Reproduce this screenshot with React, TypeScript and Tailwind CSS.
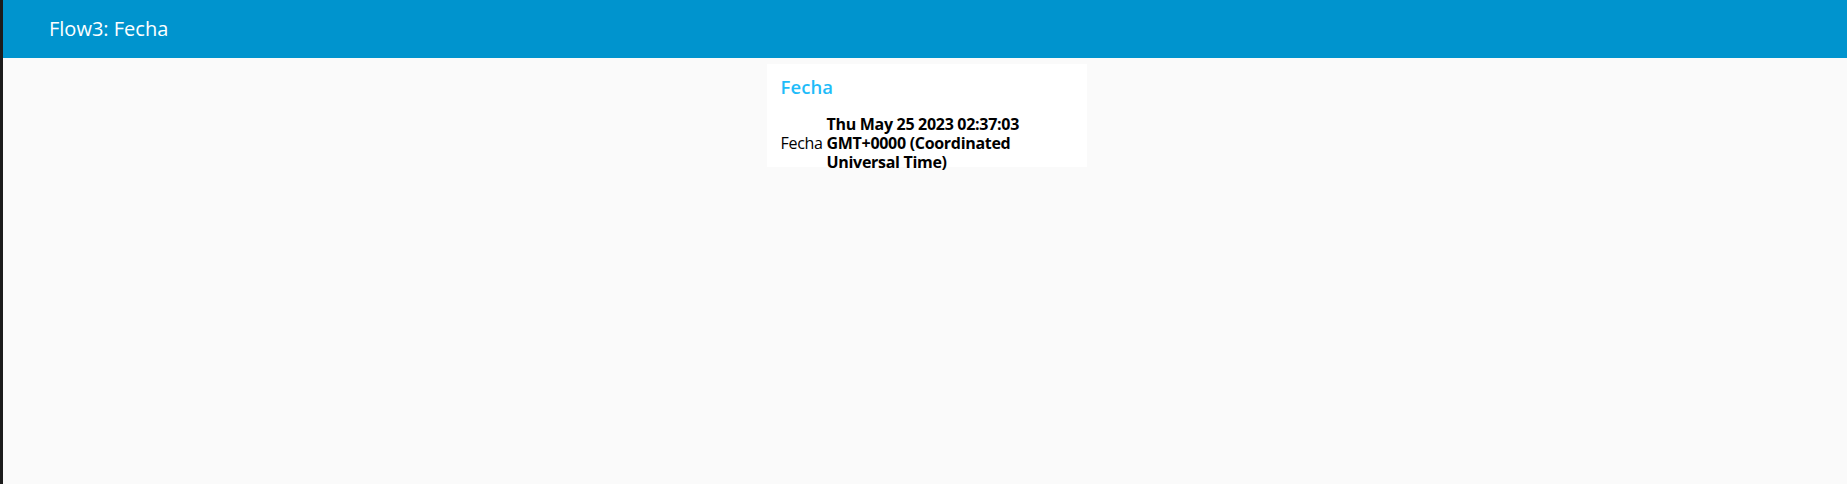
import React from "react";

export default function App() {
  return (
    <div
      className="flex w-full h-[484px] overflow-hidden"
      style={{ fontFamily: '"Open Sans", "Noto Sans", sans-serif' }}
    >
      <div className="w-[3px] h-full bg-[#1c1c1c] shrink-0" />
      <div className="flex flex-col flex-1 h-full">
        <div className="h-[58px] bg-[#0094ce] flex items-center pl-[46px] shrink-0">
          <span className="text-white text-[20px] tracking-[0px]">Flow3: Fecha</span>
        </div>
        <div className="flex-1 bg-[#fafafa] flex justify-center pt-[6px]">
          <div className="w-[320px] h-[103px] bg-white ml-[3px] px-[14px] pt-[12px] flex flex-col">
            <div className="text-[#1fbcf9] text-[18.5px] leading-[22px] font-semibold tracking-[0.1px]">Fecha</div>
            <div className="flex items-center mt-[17px] text-black text-[16px] leading-[19px] tracking-[-0.3px]">
              <span className="w-[46px] shrink-0">Fecha</span>
              <span className="font-bold flex flex-col">
                <span>Thu May 25 2023 02:37:03</span>
                <span>GMT+0000 (Coordinated</span>
                <span>Universal Time)</span>
              </span>
            </div>
          </div>
        </div>
      </div>
    </div>
  );
}
